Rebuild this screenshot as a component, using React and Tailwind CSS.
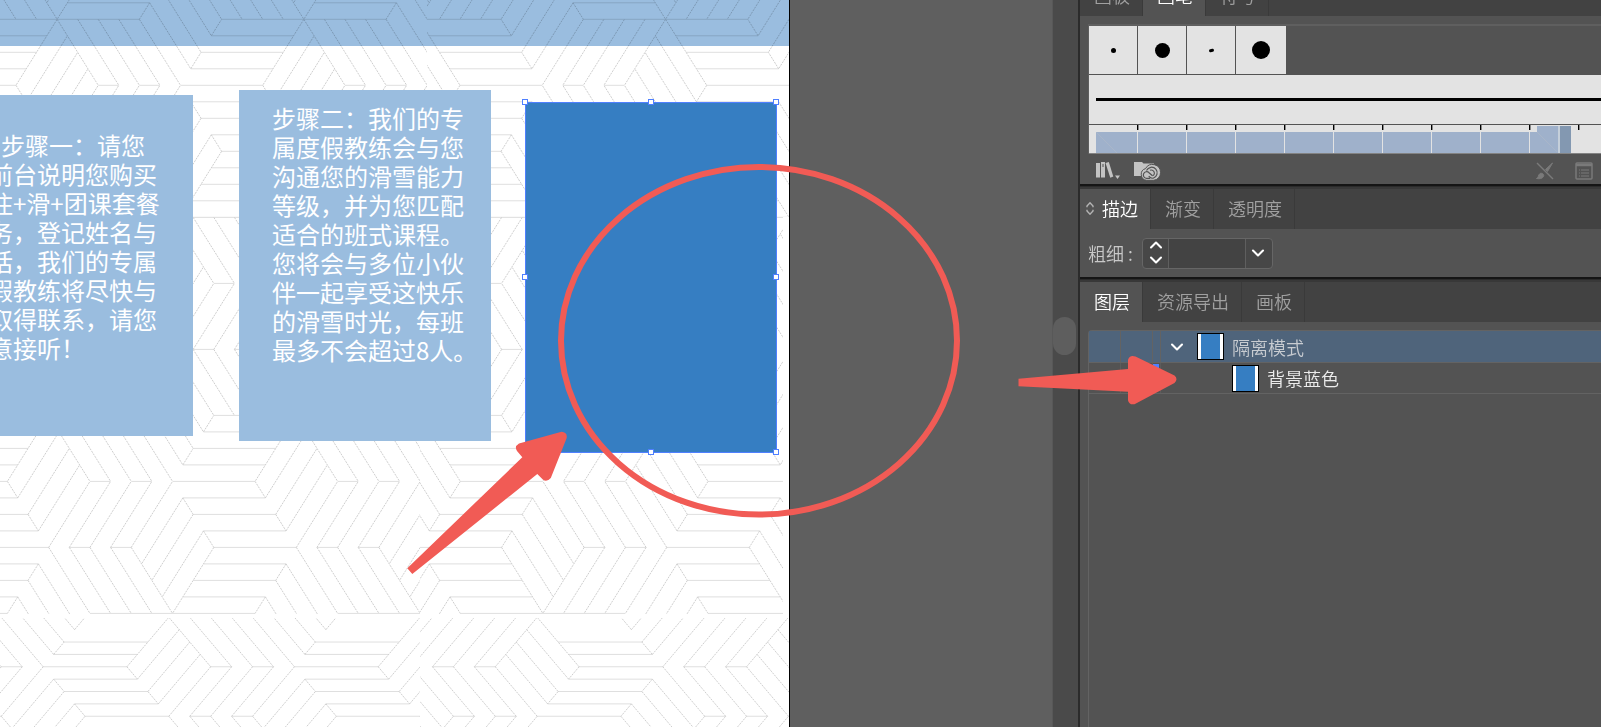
import React from 'react';
import { ChevronDown, ChevronUp } from 'lucide-react';

// The weave repeats every 24 x 24 units: [x1, x2, y] for the level lines,
// [x1, y1, x2, y2] for the slanted ones. A copy moved by (12, 12) fills the other half.
const LEVEL = [
    [19, 27, 13], [18, 26, 14], [17, 25, 15], [16, 24, 16], [8, 10, 16], [12, 14, 16],
    [17, 25, 17], [18, 26, 18], [19, 27, 19], [20, 28, 20], [6, 8, 20], [10, 12, 20],
    [19, 27, 21], [18, 26, 22], [17, 25, 23], [8, 24, 24],
];

const SLANTED = [
    [4, 12, 0, 16], [0, 16, 1, 17], [1, 17, 5, 13], [2, 18, 6, 14], [2, 18, 3, 19], [3, 19, 7, 15],
    [4, 20, 8, 16], [4, 20, 8, 24], [6, 20, 10, 16], [6, 20, 10, 24], [8, 20, 12, 16], [8, 20, 12, 24],
    [10, 20, 14, 16], [10, 20, 14, 24], [12, 20, 16, 16], [12, 20, 16, 24], [17, 17, 13, 21],
    [17, 17, 18, 18], [18, 18, 14, 22], [19, 19, 15, 23], [19, 19, 20, 20], [20, 20, 16, 24],
    [4, 12, 8, 16], [6, 12, 10, 16], [8, 12, 12, 16], [10, 12, 14, 16], [12, 12, 16, 16],
    [17, 15, 18, 14], [19, 13, 20, 12], [3, 21, 2, 22], [1, 23, 0, 24],
    [3, 21, 7, 25], [2, 22, 6, 26], [1, 23, 5, 27],
];

const SHIFTS = [];
for (let col = -2; col <= 3; col++) {
    SHIFTS.push([col * 24, 0], [col * 24 + 12, -12], [col * 24, -24]);
}

// row 1 of each repeat stays open
const levelPath = SHIFTS.map(([dx, dy]) =>
    LEVEL.filter(([, , y]) => y + dy !== 1).map(([a, b, y]) => `M${a + dx} ${y + dy}H${b + dx}`).join('')
).join('');

const slantedPath = SHIFTS.map(([dx, dy]) =>
    SLANTED.map(([a, b, c, d]) => `M${a + dx} ${b + dy}L${c + dx} ${d + dy}`).join('')
).join('');

// clip = [x, y, width, height]
const TILES = [
    { id: 'tl', clip: [0, 0, 427, 217], at: 'translate(16 -178.7) scale(10.28 16.5)' },
    { id: 'tr', clip: [427, 0, 362, 217], at: 'translate(706.7 -178.7) scale(-10.28 16.5)' },
    { id: 'ml', clip: [0, 217, 420, 397], at: 'translate(7.4 217.4) scale(10.32 16.5)' },
    { id: 'mr', clip: [420, 217, 363, 397], at: 'translate(708 217.4) scale(-10.32 16.5)' },
    { id: 'bl', clip: [0, 618, 420, 400], at: 'translate(1.3 617.3) scale(10.47 12.37)' },
    { id: 'br', clip: [420, 618, 369, 400], at: 'translate(704.7 617.3) scale(-10.47 12.37)' },
];

const Weave = () => (
    <svg className="absolute inset-0 h-full w-full" fill="none" aria-hidden="true">
        {TILES.map(({ id, clip, at }) => (
            <g key={id}>
                <clipPath id={id}>
                    <rect x={clip[0]} y={clip[1]} width={clip[2]} height={clip[3]} />
                </clipPath>
                <g clipPath={`url(#${id})`}>
                    <g transform={at}>
                        <path d={levelPath} stroke="#dfdfdf" vectorEffect="non-scaling-stroke" />
                        <path d={slantedPath} stroke="#cfcfcf" strokeDasharray="2 1" vectorEffect="non-scaling-stroke" />
                    </g>
                </g>
            </g>
        ))}
    </svg>
);

const Handle = ({ className }) => (
    <span className={`absolute h-[6px] w-[6px] border border-[#4f80ff] bg-white ${className}`} />
);

const STEP_ONE = ['步骤一：请您', '前台说明您购买', '住+滑+团课套餐', '务，登记姓名与', '话，我们的专属', '假教练将尽快与', '取得联系，请您', '意接听！'];
const STEP_TWO = [
    '步骤二：我们的专', '属度假教练会与您', '沟通您的滑雪能力', '等级，并为您匹配', '适合的班式课程。',
    '您将会与多位小伙', '伴一起享受这快乐', '的滑雪时光，每班', '最多不会超过8人。',
];

const Artboard = () => (
    <div className="relative w-[790px] shrink-0 overflow-hidden border-r border-black bg-white text-2xl leading-[29px] font-normal text-white">
        <Weave />
        <div className="absolute top-0 left-0 h-[46px] w-full bg-[#9abddf] mix-blend-multiply" />

        <div className="absolute top-[95px] -left-[59px] h-[341px] w-[252px] bg-[#9abddf] pt-[35px] pl-12">
            <p className="indent-3 whitespace-pre">{STEP_ONE.join('\n')}</p>
        </div>

        <div className="absolute top-[90px] left-[239px] h-[351px] w-[252px] bg-[#9abddf] pt-[13px] pl-[33px]">
            <p className="whitespace-pre">{STEP_TWO.join('\n')}</p>
        </div>

        <div className="absolute top-[102px] left-[525px] h-[351px] w-[252px] border border-[#4f80ff] bg-[#367ec2]">
            <Handle className="-top-1 -left-1" />
            <Handle className="-top-1 left-[122px]" />
            <Handle className="-top-1 -right-[3px]" />
            <Handle className="top-[171px] -left-1" />
            <Handle className="top-[171px] -right-[3px]" />
            <Handle className="-bottom-[3px] -left-1" />
            <Handle className="-bottom-[3px] left-[122px]" />
            <Handle className="-right-[3px] -bottom-[3px]" />
        </div>
    </div>
);

const TabBar = ({ tabs, active, collapsible, className = '' }) => (
    <div role="tablist" className={`flex h-10 shrink-0 bg-[#424242] ${className}`}>
        {tabs.map((tab) => (
            <button
                key={tab}
                role="tab"
                aria-selected={tab === active}
                className={
                    tab === active
                        ? 'flex items-center gap-2 border-r border-[#3a3a3a] bg-[#535353] pr-3 pb-[3px] pl-[14px] text-white'
                        : 'flex items-center border-r border-[#3a3a3a] pr-3 pb-[3px] pl-[14px] text-[#a0a0a0]'
                }
            >
                {collapsible && tab === active && (
                    <svg className="-ml-2 h-[14px] w-[8px]" viewBox="0 0 8 14" fill="none" stroke="#b4b4b4" strokeWidth="1.4">
                        <path d="M1 6.300V5L4 1.800l3 3.200v1.300M1 8.700V10l3 3.200 3-3.200V8.700" />
                    </svg>
                )}
                {tab}
            </button>
        ))}
    </div>
);

const TICKS = [0, 1, 2, 3, 4, 5, 6, 7, 8, 9];

const Brushes = () => (
    <div className="mt-2 ml-2 border-t-2 border-l border-[#5f5f5f]">
        <div className="flex h-12 gap-px">
            <div className="flex w-12 items-center justify-center bg-[#e3e3e3]"><span className="h-[5px] w-[5px] rounded-full bg-black" /></div>
            <div className="flex w-12 items-center justify-center bg-[#e3e3e3]"><span className="h-[15px] w-[15px] rounded-full bg-black" /></div>
            <div className="flex w-12 items-center justify-center bg-[#e3e3e3]"><span className="h-[3px] w-[5px] -rotate-12 rounded-full bg-black" /></div>
            <div className="flex w-[50px] items-center justify-center bg-[#e3e3e3]"><span className="h-[18px] w-[18px] rounded-full bg-black" /></div>
        </div>
        <div className="mt-px flex h-[49px] items-center bg-[#e3e3e3] pl-[7px]">
            <div className="h-[3px] w-full bg-black" />
        </div>
        <div className="mt-px h-[29px] border-b border-[#838383] bg-[#e3e3e3]">
            <svg className="h-[28px] w-full" aria-hidden="true">
                <path d="M7 7H448V1H470V28H7Z" fill="#9fb1cb" />
                <path d="M469 1h2v27h-2z" fill="#c5cfda" />
                <path d="M471 1h11v27h-11z" fill="#8398b1" />
                <path d="M7 7l21 21M448 7l20 20" stroke="#a9b6c9" />
                {TICKS.map((n) => (
                    <g key={n}>
                        <rect x={48 + n * 49} y="0" width="1.4" height="5" fill="#000" />
                        {n < 9 && <rect x={48 + n * 49} y="7" width="1" height="21" fill="#e3e3e3" />}
                    </g>
                ))}
            </svg>
        </div>
    </div>
);

const BrushActions = () => (
    <div className="flex h-[30px] items-center px-4 pt-[3px]">
        <button aria-label="画笔库菜单">
            <svg width="26" height="20" viewBox="0 0 26 20">
                <path d="M0 2h4v14.500H0zM5 1h4v15.500H5z" fill="#c3c3c3" />
                <path d="M9.500 2l3.300-1 4.500 14.500-3 1.200z" fill="#c3c3c3" />
                <path d="M7 3v3" stroke="#535353" />
                <path d="M19 14.500h5l-2.500 3.500z" fill="#c3c3c3" />
            </svg>
        </button>
        <button aria-label="库面板" className="ml-3">
            <svg width="28" height="20" viewBox="0 0 28 20">
                <path d="M0 1h8l1.500 1.500H20V15H0z" fill="#c3c3c3" />
                <path d="M12.500 19.300a6 6 0 0 1-1-11.700A8 8 0 0 1 26.500 11.500a7.500 7.500 0 0 1-7 7.800z" fill="#c3c3c3" stroke="#535353" />
                <path d="M18.500 14.800l-3.500-3.100a3.300 3.300 0 1 0-2.500 5.600h3.500" fill="none" stroke="#535353" strokeWidth="1.200" />
                <path d="M12.500 9.500a5.600 5.600 0 1 1 6.700 7.700c-2 .3-3-.6-4.500-2" fill="none" stroke="#535353" strokeWidth="1.200" />
                <path d="M16 9.300a3 3 0 1 1 2.500 5.500" fill="none" stroke="#535353" strokeWidth="1.100" />
            </svg>
        </button>
        <button aria-label="移去画笔描边" className="ml-[374px]">
            <svg width="18" height="18" viewBox="0 0 18 18" stroke="#7a7a7a" fill="none">
                <path d="M1 1l16 16" strokeWidth="1.500" />
                <path d="M16.500 1L9.500 7.500l2 2z" fill="#7a7a7a" />
                <path d="M.5 16.500c2-.3 1.500-3.500 3.500-5 2-1 4.500 1 3.500 3-1 2-4 2.700-7 2z" fill="#7a7a7a" />
            </svg>
        </button>
        <button aria-label="所选对象的选项" className="ml-[21px]">
            <svg width="18" height="18" viewBox="0 0 18 18" stroke="#7a7a7a" fill="none">
                <rect x="1" y="1" width="16" height="16" rx="1" strokeWidth="1.500" />
                <path d="M1 3h16" strokeWidth="2.500" />
                <path d="M4 8h1M6 8h8M4 11h1M6 11h8M4 14h1M6 14h8" strokeWidth="1.200" />
            </svg>
        </button>
    </div>
);

const Divider = () => <div className="h-[5px] shrink-0 border-t-2 border-b-2 border-t-[#151515] border-b-[#383838] bg-[#2b2b2b]" />;

const StrokeWeight = () => (
    <div className="flex h-12 items-center pl-2 text-[#c8c8c8]">
        <label htmlFor="weight" className="w-[54px]">粗细 :</label>
        <div className="flex h-[31px] rounded-sm border border-[#666] bg-[#474747] text-white">
            <div className="flex w-[26px] flex-col items-center justify-between overflow-hidden border-r border-[#5f5f5f]">
                <button aria-label="增加" className="h-[14px]"><ChevronUp size={20} strokeWidth={2.5} className="-mt-1" /></button>
                <button aria-label="减少" className="h-[14px]"><ChevronDown size={20} strokeWidth={2.5} className="-mt-1" /></button>
            </div>
            <input id="weight" className="w-[76px] bg-[#434343] px-1 text-sm outline-none" />
            <div className="relative w-[27px] border-l border-[#5f5f5f]">
                <select aria-label="粗细预设" className="h-full w-full appearance-none" />
                <ChevronDown size={20} strokeWidth={2.5} className="pointer-events-none absolute top-1 left-[2px]" />
            </div>
        </div>
    </div>
);

const Thumb = () => (
    <span className="flex h-[27px] w-[27px] shrink-0 justify-center border border-black bg-white px-[3px]">
        <span className="w-full bg-[#367ec2]" />
    </span>
);

const Layers = () => (
    <ul className="mt-2 ml-2 flex-1 rounded-tl border-t border-l border-[#636363]">
        <li className="flex h-8 items-center border-b border-[#636363] bg-[#4f647b] text-[#c8ccd1]">
            <span className="h-full w-8 border-r border-[#636363]" />
            <span className="h-full w-8 border-r border-[#636363]" />
            <span className="h-full w-2 border-r border-[#636363]" />
            <button aria-label="展开图层" className="mr-[10px] ml-[6px] text-white"><ChevronDown size={20} strokeWidth={2.5} /></button>
            <Thumb />
            <span className="pl-2">隔离模式</span>
        </li>
        <li className="flex h-[31px] items-center border-b border-[#636363] text-[#ececec]">
            <span className="h-full w-8 border-r border-[#5c5c5c]" />
            <span className="h-full w-8 border-r border-[#5c5c5c]" />
            <span className="h-full w-2 border-r border-[#5c5c5c] pt-px"><span className="block h-2 w-[6px] bg-[#4f80ff]" /></span>
            <span className="w-[71px]" />
            <Thumb />
            <span className="pl-2">背景蓝色</span>
        </li>
    </ul>
);

const Panels = () => (
    <aside className="flex w-[521px] shrink-0 flex-col overflow-hidden bg-[#535353] text-lg leading-6 font-[350] whitespace-nowrap">
        <TabBar tabs={['画板', '画笔', '符号']} active="画笔" className="-mt-6" />
        <Brushes />
        <BrushActions />
        <Divider />
        <TabBar tabs={['描边', '渐变', '透明度']} active="描边" collapsible />
        <StrokeWeight />
        <Divider />
        <TabBar tabs={['图层', '资源导出', '画板']} active="图层" />
        <Layers />
    </aside>
);

const Annotations = () => (
    <svg className="pointer-events-none absolute top-0 left-0 h-full w-full" aria-hidden="true">
        <ellipse cx="759" cy="340.800" rx="198" ry="173.800" fill="none" stroke="#f15b55" strokeWidth="6" />
        <g fill="#f15b55">
            <path d="M407.300 568.300L412.300 574 537.300 474l5.500 5.500q4 3 8-1.500L566.500 438.500q1.500-6-5-6.700L519 443.500q-5 3-2 7.500l5.300 6.300z" />
            <path d="M1018.500 378.800v7.500L1128 391.700v8.500q1 5 6.500 4L1174.500 383q4-4 0-7.500L1135.500 356.500q-6-2-7.500 3.500v9z" />
        </g>
    </svg>
);

const App = () => (
    <div className="relative flex h-screen min-w-max overflow-hidden bg-[#5f5f5f] font-['Noto_Sans_CJK_SC',sans-serif]">
        <Artboard />
        <main className="flex-1" />
        <div className="w-[26px] shrink-0 border-l border-[#585858] bg-[#4a4a4a] pr-[2px] pt-[317px]">
            <div className="h-[38px] rounded-full bg-[#5e5e5e]" />
        </div>
        <div className="w-[2px] shrink-0 bg-[#2b2b2b]" />
        <Panels />
        <Annotations />
    </div>
);

export default App;
